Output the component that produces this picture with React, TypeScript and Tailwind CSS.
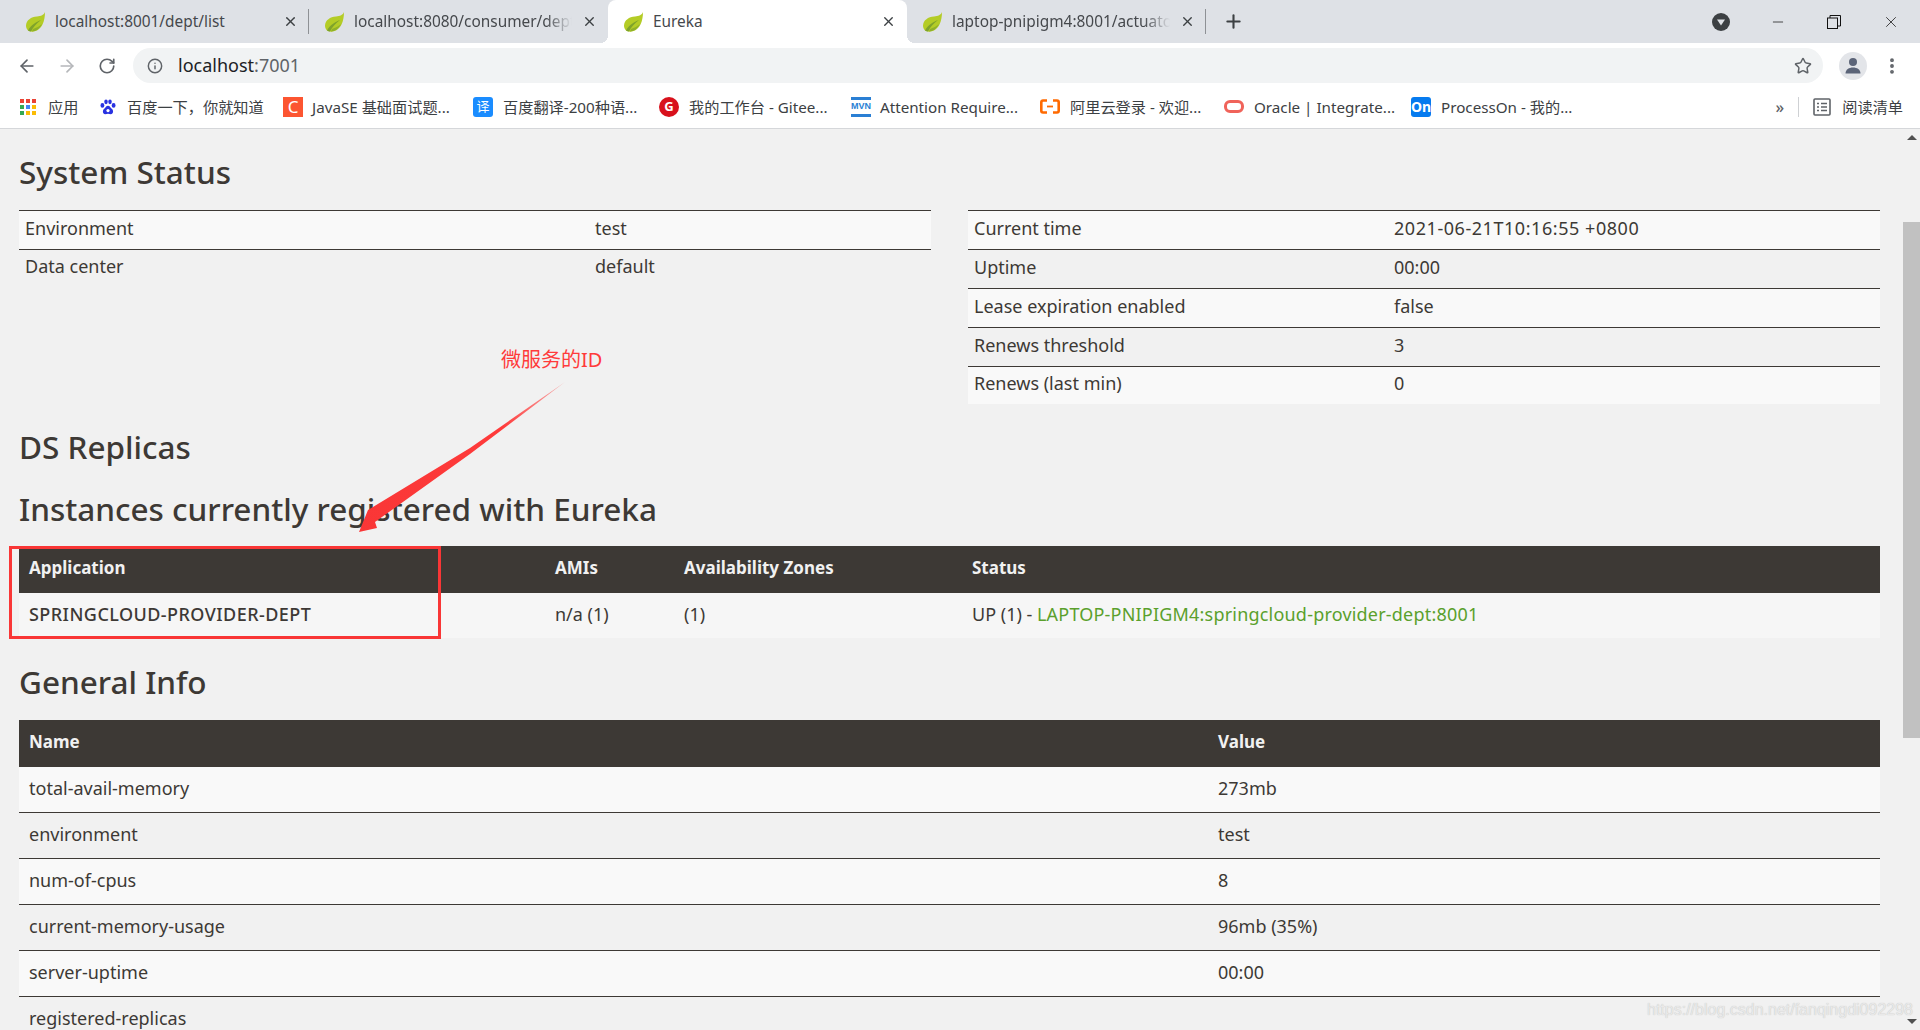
import { ArrowLeft, ArrowRight, EllipsisVertical, Info, Minus, Plus, RotateCw, Star, X } from 'lucide-react';
import type { ReactNode } from 'react';

const uiFont = 'font-["Noto_Sans","Noto_Sans_CJK_SC",sans-serif]';

function SpringLeaf() {
  return (
    <svg className="h-[20px] w-[21px] shrink-0" viewBox="0 0 21 20">
      <path d="M20 0C19 3 16 4 12 4.500C6 5 1.500 8 1 13.500C1 15 1.500 17 3 18.500C5 20 9 20 12 18.500C17 16 20 9 20 0Z" fill="#b4cc26" />
      <path d="M3 18.500C6 13 11 10 16 8C12 11 8 15 6 19.500C5 19.500 4 19 3 18.500Z" fill="#7fa32b" />
      <path d="M7 19.500C11 19.500 15 16.500 17 12C15 14 11 16 8 17Z" fill="#8fb02a" />
    </svg>
  );
}

function TabItem({ title, active, divider, fade }: { title: string; active?: boolean; divider?: boolean; fade?: boolean }) {
  return (
    <div className={active ? 'relative flex h-[43px] w-[299px] items-center rounded-t-lg bg-white pl-[15px] pr-[11px]' : 'relative flex h-[43px] w-[299px] items-center pl-[15px] pr-[11px]'}>
      <SpringLeaf />
      <span className={fade ? 'ml-[9px] w-[218px] overflow-hidden whitespace-nowrap text-[15.400px] text-[#45484c] [mask-image:linear-gradient(to_right,black_88%,transparent)]' : 'ml-[9px] w-[218px] overflow-hidden whitespace-nowrap text-[15.400px] text-[#45484c]'}>
        {title}
      </span>
      <X className="ml-auto h-[15px] w-[15px] text-[#3c4043]" strokeWidth={2.200} />
      {divider && <span className="absolute right-0 top-[9px] h-[25px] w-px bg-[#8e9195]" />}
      {active && (
        <>
          <span className="absolute -left-2 bottom-0 h-2 w-2 bg-[radial-gradient(circle_at_0_0,transparent_8px,white_8px)]" />
          <span className="absolute -right-2 bottom-0 h-2 w-2 bg-[radial-gradient(circle_at_100%_0,transparent_8px,white_8px)]" />
        </>
      )}
    </div>
  );
}

function TabStrip() {
  return (
    <div className="flex h-[43px] items-center bg-[#dee1e6] pl-[10px]">
      <TabItem title="localhost:8001/dept/list" divider />
      <TabItem title="localhost:8080/consumer/dept/list" fade />
      <TabItem title="Eureka" active />
      <TabItem title="laptop-pnipigm4:8001/actuator/info" divider fade />
      <Plus className="ml-[17px] h-[21px] w-[21px] text-[#3c4043]" strokeWidth={2.400} />
      <div className="ml-auto mr-[20px] flex items-center">
        <svg className="h-[18px] w-[18px]" viewBox="0 0 18 18">
          <circle cx="9" cy="9" r="9" fill="#3c4043" />
          <path d="M5 6.500H13L9 12.500Z" fill="#dee1e6" />
        </svg>
        <Minus className="ml-[40px] h-[16px] w-[16px] text-[#222]" strokeWidth={1.200} />
        <svg className="ml-[41px] h-[14px] w-[14px]" viewBox="0 0 14 14" fill="none" stroke="#111" strokeWidth="1">
          <rect x="0.500" y="3" width="10" height="10.500" />
          <path d="M3 3V0.500H13.500V11H10.500" />
        </svg>
        <X className="ml-[41px] h-[18px] w-[18px] text-[#222]" strokeWidth={1.100} />
      </div>
    </div>
  );
}

function Toolbar() {
  return (
    <div className="flex h-[45px] items-center bg-white pl-[17px] pr-[8px]">
      <ArrowLeft className="h-[20px] w-[20px] text-[#5f6368]" strokeWidth={2} />
      <ArrowRight className="ml-[20px] h-[20px] w-[20px] text-[#b5b7ba]" strokeWidth={2} />
      <RotateCw className="ml-[21px] h-[18px] w-[18px] text-[#5f6368]" strokeWidth={2.200} />
      <div className="ml-[17px] flex h-[35px] w-[1690px] items-center rounded-full bg-[#f1f3f4] pl-[14px] pr-[14px]">
        <Info className="h-[16px] w-[16px] text-[#5f6368]" strokeWidth={2.200} />
        <span className="ml-[15px] text-[18px] text-[#202124]">
          localhost<span className="text-[#5f6368]">:7001</span>
        </span>
        <Star className="ml-auto mr-[-3px] h-[18px] w-[18px] text-[#5f6368]" strokeWidth={2} />
      </div>
      <div className="ml-[16px] flex h-[28px] w-[28px] items-center justify-center rounded-full bg-[#e3e5e9]">
        <svg className="h-[18px] w-[18px]" viewBox="0 0 18 18" fill="#5b6478">
          <circle cx="9" cy="5" r="4" />
          <path d="M1.500 16.500C1.500 12.500 5 10.500 9 10.500C13 10.500 16.500 12.500 16.500 16.500Z" />
        </svg>
      </div>
      <EllipsisVertical className="ml-[15px] h-[20px] w-[20px] text-[#5f6368]" strokeWidth={2.600} />
    </div>
  );
}

function AppsIcon() {
  const colors = ['#ea4335', '#ea4335', '#ea4335', '#34a853', '#4285f4', '#fbbc05', '#34a853', '#fbbc05', '#fbbc05'];
  return (
    <div className="grid h-[16px] w-[16px] shrink-0 grid-cols-3 gap-[2px]">
      {colors.map((c, i) => (
        <span key={i} className="h-[4px] w-[4px]" style={{ backgroundColor: c }} />
      ))}
    </div>
  );
}

function BaiduIcon() {
  return (
    <svg className="h-[16px] w-[16px] shrink-0" viewBox="0 0 20 20" fill="#2932e1">
      <ellipse cx="3" cy="8" rx="2.400" ry="3" />
      <ellipse cx="7.500" cy="3.500" rx="2.200" ry="3" />
      <ellipse cx="12.500" cy="3.500" rx="2.200" ry="3" />
      <ellipse cx="17" cy="8" rx="2.400" ry="3" />
      <path d="M10 8.500C7.500 8.500 7 11 5 12.500C3 14 3 19 6.500 19C8 19 9 18.500 10 18.500C11 18.500 12 19 13.500 19C17 19 17 14 15 12.500C13 11 12.500 8.500 10 8.500Z" />
      <circle cx="10" cy="14.500" r="2" fill="white" />
    </svg>
  );
}

function OracleIcon() {
  return <span className="h-[13px] w-[20px] shrink-0 rounded-[6px] border-[3px] border-[#f0635a]" />;
}

function AliyunIcon() {
  return (
    <svg className="h-[15px] w-[20px] shrink-0" viewBox="0 0 20 15" fill="none" stroke="#ff6a00" strokeWidth="2.600">
      <path d="M7 1.500H3C2 1.500 1.300 2.200 1.300 3.200V11.800C1.300 12.800 2 13.500 3 13.500H7" />
      <path d="M13 1.500H17C18 1.500 18.700 2.200 18.700 3.200V11.800C18.700 12.800 18 13.500 17 13.500H13" />
      <path d="M7 7.500H13" strokeWidth="1.800" />
    </svg>
  );
}

const bookmarks: { label: string; icon: ReactNode; width: string; gap: string }[] = [
  { label: '应用', icon: <AppsIcon />, width: 'w-[80px]', gap: 'ml-[12px]' },
  { label: '百度一下，你就知道', icon: <BaiduIcon />, width: 'w-[183px]', gap: 'ml-[11px]' },
  {
    label: 'JavaSE 基础面试题...',
    icon: <span className="flex h-[20px] w-[20px] shrink-0 items-center justify-center bg-[#fc5531] text-[17px] leading-none text-white">C</span>,
    width: 'w-[190px]',
    gap: 'ml-[9px]',
  },
  {
    label: '百度翻译-200种语...',
    icon: <span className="flex h-[20px] w-[20px] shrink-0 items-center justify-center rounded-[3px] bg-[#1a8cff] text-[13px] leading-none text-white">译</span>,
    width: 'w-[186px]',
    gap: 'ml-[10px]',
  },
  {
    label: '我的工作台 - Gitee...',
    icon: (
      <span className="flex h-[20px] w-[20px] shrink-0 items-center justify-center rounded-full bg-[#d8111c] text-[13px] font-bold leading-none text-white">
        G
      </span>
    ),
    width: 'w-[192px]',
    gap: 'ml-[10px]',
  },
  {
    label: 'Attention Require...',
    icon: (
      <span className="flex h-[20px] w-[20px] shrink-0 items-center justify-center border-y-[3px] border-[#2a7fd4] font-['Liberation_Sans',sans-serif] text-[9px] font-bold leading-none text-[#2a7fd4]">
        MVN
      </span>
    ),
    width: 'w-[189px]',
    gap: 'ml-[9px]',
  },
  { label: '阿里云登录 - 欢迎...', icon: <AliyunIcon />, width: 'w-[184px]', gap: 'ml-[10px]' },
  { label: 'Oracle | Integrate...', icon: <OracleIcon />, width: 'w-[187px]', gap: 'ml-[10px]' },
  {
    label: 'ProcessOn - 我的...',
    icon: <span className="flex h-[20px] w-[20px] shrink-0 items-center justify-center rounded-[3px] bg-[#067bef] text-[14px] font-bold leading-none text-white">On</span>,
    width: 'w-[300px]',
    gap: 'ml-[10px]',
  },
];

function BookmarksBar() {
  return (
    <div className="flex h-[41px] items-center border-b border-[#d5d7da] bg-white pb-[2px] pl-[20px] pr-[17px] text-[15.200px] text-[#3c4043]">
      {bookmarks.map(b => (
        <div key={b.label} className={`flex items-center ${b.width}`}>
          {b.icon}
          <span className={`whitespace-nowrap ${b.gap}`}>{b.label}</span>
        </div>
      ))}
      <span className="ml-auto text-[16px] font-medium text-[#5f6368]">»</span>
      <span className="ml-[14px] h-[20px] w-px bg-[#cfd1d4]" />
      <svg className="ml-[14px] h-[18px] w-[18px]" viewBox="0 0 18 18" fill="none" stroke="#5f6368" strokeWidth="1.600">
        <rect x="1" y="1" width="16" height="16" rx="1" />
        <path d="M4 5.500H6M8 5.500H14M4 9H6M8 9H14M4 12.500H6M8 12.500H14" />
      </svg>
      <span className="ml-[11px]">阅读清单</span>
    </div>
  );
}

function Heading({ children, className }: { children: ReactNode; className: string }) {
  return <h2 className={`text-[31.500px] font-medium leading-[33px] text-[#3d3935] ${className}`}>{children}</h2>;
}

function StatusTable({ rows, colClass }: { rows: [string, ReactNode][]; colClass: string }) {
  return (
    <table className="w-[912px] table-fixed self-start border-t border-[#3d3935] text-[18px] text-[#3d3935]">
      <colgroup>
        <col className={colClass} />
        <col />
      </colgroup>
      <tbody>
        {rows.map(([k, v], i) => (
          <tr key={k} className={i % 2 === 0 ? 'bg-[#f9f9f9]' : ''}>
            <td className={i < rows.length - 1 ? 'h-[39px] border-b border-[#3d3935] pb-[4px] pl-[6px]' : 'h-[37px] pb-[4px] pl-[6px]'}>{k}</td>
            <td className={i < rows.length - 1 ? 'h-[39px] border-b border-[#3d3935] pb-[4px] pl-[6px]' : 'h-[37px] pb-[4px] pl-[6px]'}>{v}</td>
          </tr>
        ))}
      </tbody>
    </table>
  );
}

const generalInfo: [string, string][] = [
  ['total-avail-memory', '273mb'],
  ['environment', 'test'],
  ['num-of-cpus', '8'],
  ['current-memory-usage', '96mb (35%)'],
  ['server-uptime', '00:00'],
  ['registered-replicas', ''],
];

function Annotation() {
  return (
    <>
      <span className="absolute left-[501px] top-[347px] text-[20px] leading-[26px] text-[#ff3b3b]">微服务的ID</span>
      <svg className="absolute left-[350px] top-[375px] h-[165px] w-[225px]" viewBox="0 0 225 165">
        <defs>
          <linearGradient id="arrowFade" x1="215" y1="7" x2="9" y2="157" gradientUnits="userSpaceOnUse">
            <stop offset="0" stopColor="#ff3b3b" stopOpacity="0.350" />
            <stop offset="0.300" stopColor="#ff3b3b" />
            <stop offset="1" stopColor="#f93636" />
          </linearGradient>
        </defs>
        <path d="M215 7L120 73L18 135L9 157L27 153L25 147L120 79Z" fill="url(#arrowFade)" />
      </svg>
      <div className="absolute left-[9px] top-[546px] h-[93px] w-[432px] border-[3px] border-[#f93636]" />
    </>
  );
}

export default function App() {
  return (
    <div className={`relative h-[1030px] overflow-hidden bg-[#f1f1f1] ${uiFont}`}>
      <TabStrip />
      <Toolbar />
      <BookmarksBar />

      <main className="w-[1880px] pl-[19px] pt-[26px]">
        <Heading className="mb-[22px]">System Status</Heading>
        <div className="flex w-[1861px] gap-[37px]">
          <StatusTable
            colClass="w-[570px]"
            rows={[
              ['Environment', 'test'],
              ['Data center', 'default'],
            ]}
          />
          <StatusTable
            colClass="w-[420px]"
            rows={[
              ['Current time', <span className="tracking-[0.550px]">2021-06-21T10:16:55 +0800</span>],
              ['Uptime', '00:00'],
              ['Lease expiration enabled', 'false'],
              ['Renews threshold', '3'],
              ['Renews (last min)', '0'],
            ]}
          />
        </div>

        <Heading className="mt-[26px]">DS Replicas</Heading>
        <Heading className="mb-[21px] mt-[29px]">Instances currently registered with Eureka</Heading>

        <table className="w-[1861px] table-fixed text-[18px] text-[#3d3935]">
          <colgroup>
            <col className="w-[526px]" />
            <col className="w-[129px]" />
            <col className="w-[288px]" />
            <col />
          </colgroup>
          <thead>
            <tr className="h-[47px] bg-[#3d3935] text-left text-[17px] text-[#f1f1f1]">
              <th className="pb-[2px] pl-[10px] font-bold">Application</th>
              <th className="pb-[2px] pl-[10px] font-bold">AMIs</th>
              <th className="pb-[2px] pl-[10px] font-bold">Availability Zones</th>
              <th className="pb-[2px] pl-[10px] font-bold">Status</th>
            </tr>
          </thead>
          <tbody>
            <tr className="h-[45px] bg-[#f6f6f6]">
              <td className="pb-[2px] pl-[10px] font-medium tracking-[0.450px]">SPRINGCLOUD-PROVIDER-DEPT</td>
              <td className="pb-[2px] pl-[10px]">n/a (1)</td>
              <td className="pb-[2px] pl-[10px]">(1)</td>
              <td className="pb-[2px] pl-[10px]">
                UP (1) - <a className="tracking-[0.200px] text-[#5aa02c]">LAPTOP-PNIPIGM4:springcloud-provider-dept:8001</a>
              </td>
            </tr>
          </tbody>
        </table>

        <Heading className="mb-[22px] mt-[27px]">General Info</Heading>

        <table className="w-[1861px] table-fixed text-[18px] text-[#3d3935]">
          <colgroup>
            <col className="w-[1190px]" />
            <col />
          </colgroup>
          <thead>
            <tr className="h-[47px] bg-[#3d3935] text-left text-[17px] text-[#f1f1f1]">
              <th className="pb-[2px] pl-[10px] font-bold">Name</th>
              <th className="pb-[2px] pl-[9px] font-bold">Value</th>
            </tr>
          </thead>
          <tbody>
            {generalInfo.map(([k, v], i) => (
              <tr key={k} className={i % 2 === 0 ? 'bg-[#f9f9f9]' : ''}>
                <td className="h-[46px] border-b border-[#3d3935] pb-[2px] pl-[10px]">{k}</td>
                <td className="h-[46px] border-b border-[#3d3935] pb-[2px] pl-[9px]">{v}</td>
              </tr>
            ))}
          </tbody>
        </table>
      </main>

      {/* scrollbar */}
      <div className="absolute bottom-0 right-0 top-[129px] flex w-[17px] flex-col items-center bg-[#f1f1f1]">
        <span className="mt-[6px] h-0 w-0 border-x-[5px] border-b-[5px] border-x-transparent border-b-[#505050]" />
        <span className="mt-[82px] h-[516px] w-full bg-[#c1c1c1]" />
        <span className="mt-auto mb-[6px] h-0 w-0 border-x-[5px] border-t-[5px] border-x-transparent border-t-[#505050]" />
      </div>

      <Annotation />

      <span className="absolute bottom-[8px] right-[7px] font-['Liberation_Sans',sans-serif] text-[16px] text-[#e9e9e9] [text-shadow:0_0_1px_#bbb]">
        https://blog.csdn.net/fanqingdi092298
      </span>
    </div>
  );
}
